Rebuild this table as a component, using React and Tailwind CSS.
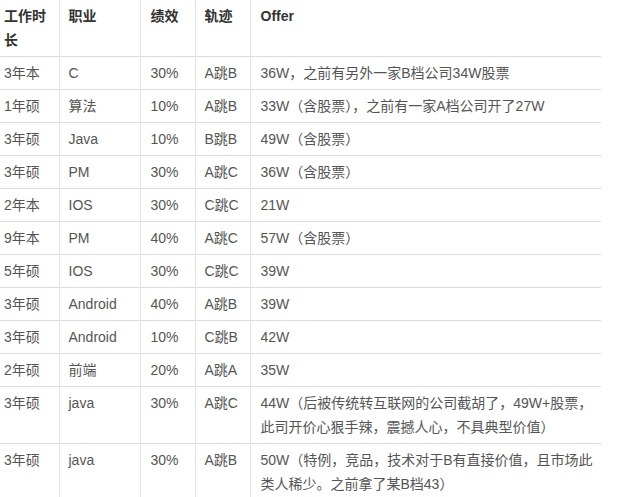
import React from 'react';

const rows = [
  ['3年本', 'C', '30%', 'A跳B', '36W，之前有另外一家B档公司34W股票'],
  ['1年硕', '算法', '10%', 'A跳B', '33W（含股票），之前有一家A档公司开了27W'],
  ['3年硕', 'Java', '10%', 'B跳B', '49W（含股票）'],
  ['3年硕', 'PM', '30%', 'A跳C', '36W（含股票）'],
  ['2年本', 'IOS', '30%', 'C跳C', '21W'],
  ['9年本', 'PM', '40%', 'A跳C', '57W（含股票）'],
  ['5年硕', 'IOS', '30%', 'C跳C', '39W'],
  ['3年硕', 'Android', '40%', 'A跳B', '39W'],
  ['3年硕', 'Android', '10%', 'C跳B', '42W'],
  ['2年硕', '前端', '20%', 'A跳A', '35W'],
  ['3年硕', 'java', '30%', 'A跳C', '44W（后被传统转互联网的公司截胡了，49W+股票，此司开价心狠手辣，震撼人心，不具典型价值）'],
  ['3年硕', 'java', '30%', 'A跳B', '50W（特例，竞品，技术对于B有直接价值，且市场此类人稀少。之前拿了某B档43）'],
];

const headers = ['工作时长', '职业', '绩效', '轨迹', 'Offer'];

// per-column cell classes (first column hugs the left edge)
const cellCls = [
  'pl-1 pr-[9px] border-r border-[#e3e3e3]',
  'pl-[9px] pr-2 border-r border-[#e3e3e3]',
  'pl-[10px] pr-2 border-r border-[#e3e3e3]',
  'pl-[9px] pr-2 border-r border-[#e3e3e3]',
  'pl-[10px] pr-1',
];

export default function App() {
  return (
    <div className="w-[632px] h-[497px] overflow-hidden bg-white">
      <table
        className="w-[601px] table-fixed border-collapse text-[14px] leading-[24px]"
        style={{ fontFamily: '"Liberation Sans", "Noto Sans CJK SC", sans-serif' }}
      >
        <colgroup>
          <col className="w-[59px]" />
          <col className="w-[81px]" />
          <col className="w-[55px]" />
          <col className="w-[55px]" />
          <col />
        </colgroup>
        <thead>
          <tr className="border-b border-[#dcdcdc]">
            {headers.map((h, i) => (
              <th
                key={h}
                className={`${cellCls[i]} py-1 text-left align-top font-bold text-[#333]`}
              >
                {h}
              </th>
            ))}
          </tr>
        </thead>
        <tbody>
          {rows.map((r, ri) => (
            <tr key={ri} className="border-b border-[#dcdcdc]">
              {r.map((c, i) => (
                <td key={i} className={`${cellCls[i]} py-1 align-top text-[#555]`}>
                  {c}
                </td>
              ))}
            </tr>
          ))}
        </tbody>
      </table>
    </div>
  );
}
